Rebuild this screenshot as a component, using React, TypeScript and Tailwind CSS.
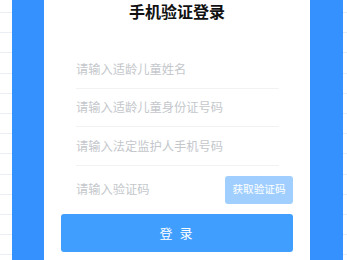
import React from 'react';

const stripes = Array.from({ length: 13 });

const Stripes = ({ width }: { width: string }) => (
  <div className={`${width} shrink-0 bg-white flex flex-col pt-[12px]`}>
    {stripes.map((_, i) => (
      <div key={i} className="h-[20.2px] shrink-0 border-t border-[#ebeef5]" />
    ))}
  </div>
);

const fields = ['请输入适龄儿童姓名', '请输入适龄儿童身份证号码', '请输入法定监护人手机号码'];

const App = () => {
  return (
    <div
      className="w-[347px] h-[260px] overflow-hidden flex"
      style={{ fontFamily: '"Noto Sans CJK SC", "Noto Sans", sans-serif' }}
    >
      <Stripes width="w-[12px]" />
      <div className="w-[32px] shrink-0 bg-[#3591fe]" />

      {/* login card */}
      <div className="w-[266px] shrink-0 bg-white flex flex-col">
        <h2 className="h-[22px] leading-[22px] text-center text-[16px] font-bold text-[#111]">手机验证登录</h2>

        <div className="mt-[28px] flex flex-col">
          {fields.map((f) => (
            <div key={f} className="mx-[32px] w-[203px] h-[38.5px] flex items-center border-b border-[#f2f2f2]">
              <input
                className="w-full outline-none text-[12.25px] text-[#606266] placeholder:text-[#c4c7cc] bg-transparent"
                placeholder={f}
              />
            </div>
          ))}
          <div className="ml-[32px] mr-[17px] h-[48px] flex items-center justify-between">
            <input
              className="w-[140px] outline-none text-[12.25px] text-[#606266] placeholder:text-[#c4c7cc] bg-transparent"
              placeholder="请输入验证码"
            />
            <button className="w-[68px] h-[28px] rounded-[3px] bg-[#a0cfff] text-white text-[10.6px] leading-none">
              获取验证码
            </button>
          </div>
        </div>

        <button className="mx-[17px] h-[38px] rounded-[3px] bg-[#409eff] text-white text-[13px] tracking-[2px]">
          登 录
        </button>
      </div>

      <div className="w-[33px] shrink-0 bg-[#3591fe]" />
      <Stripes width="w-[4px]" />
    </div>
  );
};

export default App;
